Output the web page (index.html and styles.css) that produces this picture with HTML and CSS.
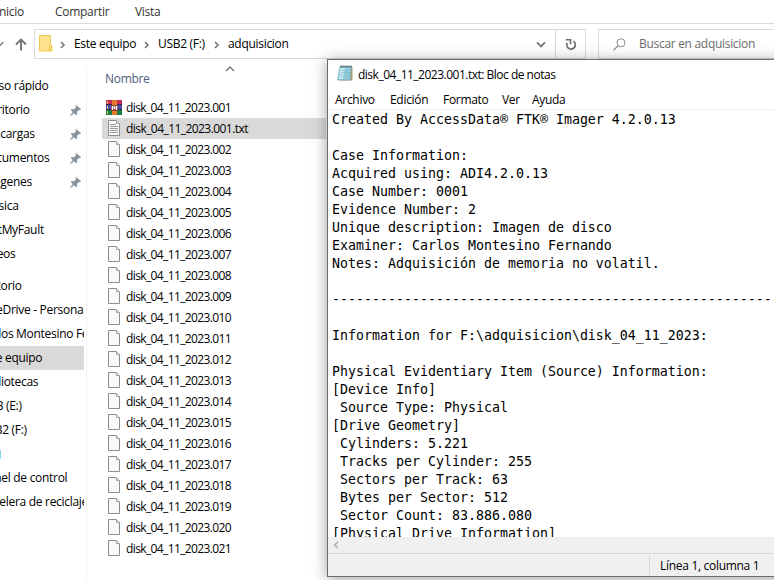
FILE: index.html
```html
<!DOCTYPE html>
<html lang="es">
<head>
<meta charset="utf-8">
<title>adquisicion</title>
<link rel="stylesheet" href="styles.css">
</head>
<body>
<svg class="defs" width="0" height="0" aria-hidden="true">
  <symbol id="page" viewBox="0 0 12 16">
    <path d="M.5.5h8l3 3v12H.5z" fill="#f8fafa" stroke="#8b8d8e"/>
    <path d="M8.5.5v3h3" fill="#e8eaea" stroke="#a3a5a5"/>
  </symbol>
  <symbol id="pin" viewBox="0 0 11 11">
    <path d="M6 0l5 4-1 1.300-1-.2-2 2 .2 2.400-1 .8-2.100-2.100L.7 11 0 10.400l2.700-3.300L.8 5.100l.8-1 2.500.2 2-2L5.500 1z" fill="#8795a0"/>
  </symbol>
  <symbol id="chev" viewBox="0 0 6 8">
    <path d="M1 1l3 3-3 3" fill="none" stroke="#777" stroke-width="1.600"/>
  </symbol>
</svg>
<div class="explorer">
  <nav class="tabs"><span class="t1">Inicio</span><span class="t2">Compartir</span><span class="t3">Vista</span></nav>
  <div class="toolbar">
    <svg class="history" width="5" height="6" viewBox="0 0 5 6"><path d="M-2 1L0 4.500 3.500 1" fill="none" stroke="#858585" stroke-width="1.500"/></svg>
    <svg class="up" width="12" height="13" viewBox="0 0 12 13"><path d="M6 12.500V1.500M1 6.500l5-5 5 5" fill="none" stroke="#757575" stroke-width="1.900"/></svg>
    <div class="address">
      <svg class="folder" width="14" height="17" viewBox="0 0 14 17"><path d="M.5.5h11v9l1.500 1.500v5H.5z" fill="#ffe28d" stroke="#efc84f"/><path d="M10.500 16v-4.500l1-1.500" fill="none" stroke="#e5b735"/></svg>
      <svg class="sep s1" width="6" height="8"><use href="#chev"/></svg>
      <span class="crumb c1">Este equipo</span>
      <svg class="sep s2" width="6" height="8"><use href="#chev"/></svg>
      <span class="crumb c2">USB2 (F:)</span>
      <svg class="sep s3" width="6" height="8"><use href="#chev"/></svg>
      <span class="crumb c3">adquisicion</span>
      <svg class="drop" width="10" height="7" viewBox="0 0 10 7"><path d="M1 1.300l4 4 4-4" fill="none" stroke="#777" stroke-width="1.900"/></svg>
      <div class="refresh"><svg width="12" height="13" viewBox="0 0 12 13"><path d="M8.400 3.300A4.200 4.200 0 1 1 2.300 5" fill="none" stroke="#707070" stroke-width="1.800"/><path d="M.8 1.800h4.700v4.500" fill="none" stroke="#707070" stroke-width="1.600"/></svg></div>
    </div>
    <div class="search">
      <svg width="13" height="13" viewBox="0 0 13 13"><circle cx="8" cy="4.800" r="4" fill="none" stroke="#8d8d92"/><path d="M5 7.700L.6 12.300" stroke="#8d8188" stroke-width="1.200"/></svg>
      <span>Buscar en adquisicion</span>
    </div>
  </div>
  <div class="content">
    <ul class="tree">
      <li class="e1"><span>Acceso rápido</span></li>
      <li class="e2 pinned"><span>Escritorio</span><svg width="11" height="11"><use href="#pin"/></svg></li>
      <li class="e3 pinned"><span>Descargas</span><svg width="11" height="11"><use href="#pin"/></svg></li>
      <li class="e4 pinned"><span>Documentos</span><svg width="11" height="11"><use href="#pin"/></svg></li>
      <li class="e5 pinned"><span>Imágenes</span><svg width="11" height="11"><use href="#pin"/></svg></li>
      <li class="e6"><span>Música</span></li>
      <li class="e7"><span>NotMyFault</span></li>
      <li class="e8"><span>Vídeos</span></li>
      <li class="e9 group"><span>Escritorio</span></li>
      <li class="e10"><span>OneDrive - Personal</span></li>
      <li class="e11"><span>Carlos Montesino Fernando</span></li>
      <li class="e12 current"><span>Este equipo</span></li>
      <li class="e13"><span>Bibliotecas</span></li>
      <li class="e14"><span>USB (E:)</span></li>
      <li class="e15"><span>USB2 (F:)</span></li>
      <li class="net"><i></i></li>
      <li class="e17"><span>Panel de control</span></li>
      <li class="e18"><span>Papelera de reciclaje</span></li>
    </ul>
    <section class="files">
      <header><span>Nombre</span><svg width="10" height="6" viewBox="0 0 10 6"><path d="M1 5l4-4 4 4" fill="none" stroke="#666" stroke-width="1.100"/></svg></header>
      <ul>
        <li><svg class="rar" width="16" height="15" viewBox="0 0 16 15"><path d="M0 0h16v5H0z" fill="#c72a55"/><path d="M0 5h16v5H0z" fill="#4a4bb0"/><path d="M0 10h16v5H0z" fill="#168044"/><path d="M0 4.500h16M0 9.500h16" stroke="#3a2448"/><path d="M1.500 1v3M1.500 6v3M1.500 11v3" stroke="#e8c75a"/><path d="M6 0h5v15H6z" fill="#e67828"/><path d="M5 5h7v6H5z" fill="#8c3d31"/><path d="M6.500 10V6M10.500 10V6M8.500 6v3" stroke="#fff" stroke-width="1.400"/></svg><span>disk_04_11_2023.001</span></li>
        <li class="selected"><svg width="12" height="16" viewBox="0 0 12 16"><use href="#page"/><path d="M2 4.500h6M2 6.500h8M2 8.500h8M2 10.500h8M2 12.500h8" stroke="#9a9c9c"/></svg><span>disk_04_11_2023.001.txt</span></li>
        <li><svg width="12" height="16"><use href="#page"/></svg><span>disk_04_11_2023.002</span></li>
        <li><svg width="12" height="16"><use href="#page"/></svg><span>disk_04_11_2023.003</span></li>
        <li><svg width="12" height="16"><use href="#page"/></svg><span>disk_04_11_2023.004</span></li>
        <li><svg width="12" height="16"><use href="#page"/></svg><span>disk_04_11_2023.005</span></li>
        <li><svg width="12" height="16"><use href="#page"/></svg><span>disk_04_11_2023.006</span></li>
        <li><svg width="12" height="16"><use href="#page"/></svg><span>disk_04_11_2023.007</span></li>
        <li><svg width="12" height="16"><use href="#page"/></svg><span>disk_04_11_2023.008</span></li>
        <li><svg width="12" height="16"><use href="#page"/></svg><span>disk_04_11_2023.009</span></li>
        <li><svg width="12" height="16"><use href="#page"/></svg><span>disk_04_11_2023.010</span></li>
        <li><svg width="12" height="16"><use href="#page"/></svg><span>disk_04_11_2023.011</span></li>
        <li><svg width="12" height="16"><use href="#page"/></svg><span>disk_04_11_2023.012</span></li>
        <li><svg width="12" height="16"><use href="#page"/></svg><span>disk_04_11_2023.013</span></li>
        <li><svg width="12" height="16"><use href="#page"/></svg><span>disk_04_11_2023.014</span></li>
        <li><svg width="12" height="16"><use href="#page"/></svg><span>disk_04_11_2023.015</span></li>
        <li><svg width="12" height="16"><use href="#page"/></svg><span>disk_04_11_2023.016</span></li>
        <li><svg width="12" height="16"><use href="#page"/></svg><span>disk_04_11_2023.017</span></li>
        <li><svg width="12" height="16"><use href="#page"/></svg><span>disk_04_11_2023.018</span></li>
        <li><svg width="12" height="16"><use href="#page"/></svg><span>disk_04_11_2023.019</span></li>
        <li><svg width="12" height="16"><use href="#page"/></svg><span>disk_04_11_2023.020</span></li>
        <li><svg width="12" height="16"><use href="#page"/></svg><span>disk_04_11_2023.021</span></li>
      </ul>
    </section>
  </div>
</div>
<div class="notepad">
  <div class="title">
    <svg width="16" height="17" viewBox="0 0 16 17"><path d="M4 2h11.500v13.500H3z" fill="#b59c72"/><path d="M3 1.500h11.500L13 15H.5z" fill="#91cbd9" stroke="#6ba8b8" stroke-width=".7"/><path d="M3 3h5L6 14H1.500z" fill="#c3e7ee"/><path d="M3 5.500h10M3 7.500h10M2.500 9.500h10M2 11.500h10" stroke="#78b8c9" stroke-width=".5"/><path d="M3.500 1.500h11" stroke="#3d5056" stroke-width="2" stroke-dasharray="1 1"/></svg>
    <span>disk_04_11_2023.001.txt: Bloc de notas</span>
  </div>
  <div class="menu"><span class="m1">Archivo</span><span class="m2">Edición</span><span class="m3">Formato</span><span class="m4">Ver</span><span class="m5">Ayuda</span></div>
  <pre class="text">Created By AccessData® FTK® Imager 4.2.0.13

Case Information:
Acquired using: ADI4.2.0.13
Case Number: 0001
Evidence Number: 2
Unique description: Imagen de disco
Examiner: Carlos Montesino Fernando
Notes: Adquisición de memoria no volatil.

--------------------------------------------------------------

Information for F:\adquisicion\disk_04_11_2023:

Physical Evidentiary Item (Source) Information:
[Device Info]
 Source Type: Physical
[Drive Geometry]
 Cylinders: 5.221
 Tracks per Cylinder: 255
 Sectors per Track: 63
 Bytes per Sector: 512
 Sector Count: 83.886.080
[Physical Drive Information]</pre>
  <div class="scroll"><svg width="6" height="8" viewBox="0 0 6 8"><path d="M5 .8L1.500 4 5 7.200" fill="none" stroke="#b9b9b9" stroke-width="1.700"/></svg></div>
  <div class="status"><div><span>Línea 1, columna 1</span></div></div>
</div>
</body>
</html>
```
FILE: styles.css
```css
* { box-sizing: border-box; }
body {
  margin: 0;
  width: 774px;
  height: 580px;
  overflow: hidden;
  position: relative;
  background: #fff;
  color: #000;
  font: 12px/16px "Open Sans", "Noto Sans", sans-serif;
  letter-spacing: -0.3px;
  white-space: nowrap;
}
svg { display: block; flex: none; }
.defs { position: absolute; }
ul { list-style: none; margin: 0; padding: 0; }
.explorer { width: 774px; height: 580px; overflow: hidden; }

.tabs {
  display: flex;
  height: 24px;
  padding-top: 4px;
  border-bottom: 1px solid #dadada;
  color: #333;
}
.tabs span { flex: none; }
.t1 { width: 59px; margin-left: -4px; }
.t2 { width: 80px; }

.toolbar { display: flex; padding-top: 5px; height: 36px; }
.history { margin-top: 12px; }
.up { margin: 9px 7px 0 10px; }
.address {
  display: flex;
  align-items: center;
  width: 552px;
  height: 30px;
  border: 1px solid #d9d9d9;
  padding-left: 4px;
}
.folder { margin-top: -1px; }
.sep { margin-top: 1px; }
.s1 { margin-left: 7px; }
.c1 { width: 70px; margin-left: 8px; }
.c2 { width: 56px; margin-left: 8px; }
.c3 { margin-left: 8px; }
.drop { margin-left: auto; margin-right: 9px; }
.refresh {
  display: grid;
  place-items: center;
  width: 30px;
  height: 28px;
  border-left: 1px solid #d9d9d9;
}
.search {
  display: flex;
  align-items: center;
  flex: 1;
  height: 30px;
  margin-left: 12px;
  padding-left: 14px;
  gap: 13px;
  border: 1px solid #d9d9d9;
  border-right: 0;
  color: #6d6d6d;
}

.content { display: flex; height: 520px; padding-top: 6px; }
.tree { width: 87px; padding-top: 8px; border-right: 1px solid #f2f2f2; }
.tree li {
  display: flex;
  align-items: center;
  width: 84px;
  height: 24px;
  overflow: hidden;
}
.tree span { flex: none; }
.tree li svg { margin-left: auto; margin-right: 3px; }
.tree .group { margin-top: 8px; }
.tree .current { background: #d9d9d9; }
.net i { width: 1px; height: 9px; background: #8fd3f5; }
.e1 span { margin-left: -26px; }
.e2 span { margin-left: -20px; }
.e9 span { margin-left: -24px; }
.e2 span { margin-left: -20px; }
.e3 span { margin-left: -20px; }
.e4 span { margin-left: -19px; }
.e5 span { margin-left: -20px; }
.e6 span { margin-left: -19px; }
.e7 span { margin-left: -18px; }
.e8 span { margin-left: -20px; }
.e9 span { margin-left: -28px; }
.e10 span { margin-left: -20px; }
.e11 span { margin-left: -20px; }
.e12 span { margin-left: -20px; }
.e13 span { margin-left: -19px; }
.e14 span { margin-left: -19px; }
.e15 span { margin-left: -20px; }
.e17 span { margin-left: -19px; }
.e18 span { margin-left: -21px; }

.files { width: 239px; padding-left: 15px; }
.files header {
  display: flex;
  height: 31px;
  padding: 4px 0 0 3px;
  color: #4c607a;
}
.files header span { width: 120px; padding-top: 1px; }
.files header svg { margin-top: -4px; }
.files li {
  display: flex;
  align-items: center;
  height: 21px;
  padding-left: 6px;
  gap: 6px;
  letter-spacing: -0.62px;
}
.files li svg { margin-bottom: 1px; }
.files .rar { margin: 0 -2px 0 -2px; }
.files .selected { background: #d9d9d9; letter-spacing: -0.56px; }

.notepad {
  position: absolute;
  left: 327px;
  top: 59px;
  width: 460px;
  height: 518px;
  display: flex;
  flex-direction: column;
  border: 1px solid #6d6d6d;
  background: #fff;
  box-shadow: 0 2px 14px rgba(0, 0, 0, .38);
  color: #000;
}
.title { display: flex; height: 31px; padding: 5px 0 0 9px; gap: 5px; letter-spacing: -0.5px; }
.title span { padding-top: 2px; }
.menu { display: flex; height: 19px; padding: 1px 0 0 7px; border-bottom: 1px solid #ededed; }
.m1 { width: 55px; }
.m2 { width: 53px; }
.m3 { width: 59px; }
.m4 { width: 30px; }
.text {
  margin: 0;
  height: 427px;
  padding: 1px 0 0 4px;
  overflow: hidden;
  font: 13.29px/18px "DejaVu Sans Mono", monospace;
  letter-spacing: 0;
}
.scroll { height: 16px; padding: 4px 0 0 5px; background: #f0f0f0; }
.status {
  flex: 1;
  display: flex;
  background: #f0f0f0;
  border-top: 1px solid #d7d7d7;
}
.status div {
  margin: 1px 0 1px 321px;
  padding: 3px 0 0 10px;
  border-left: 1px solid #d7d7d7;
}
```
